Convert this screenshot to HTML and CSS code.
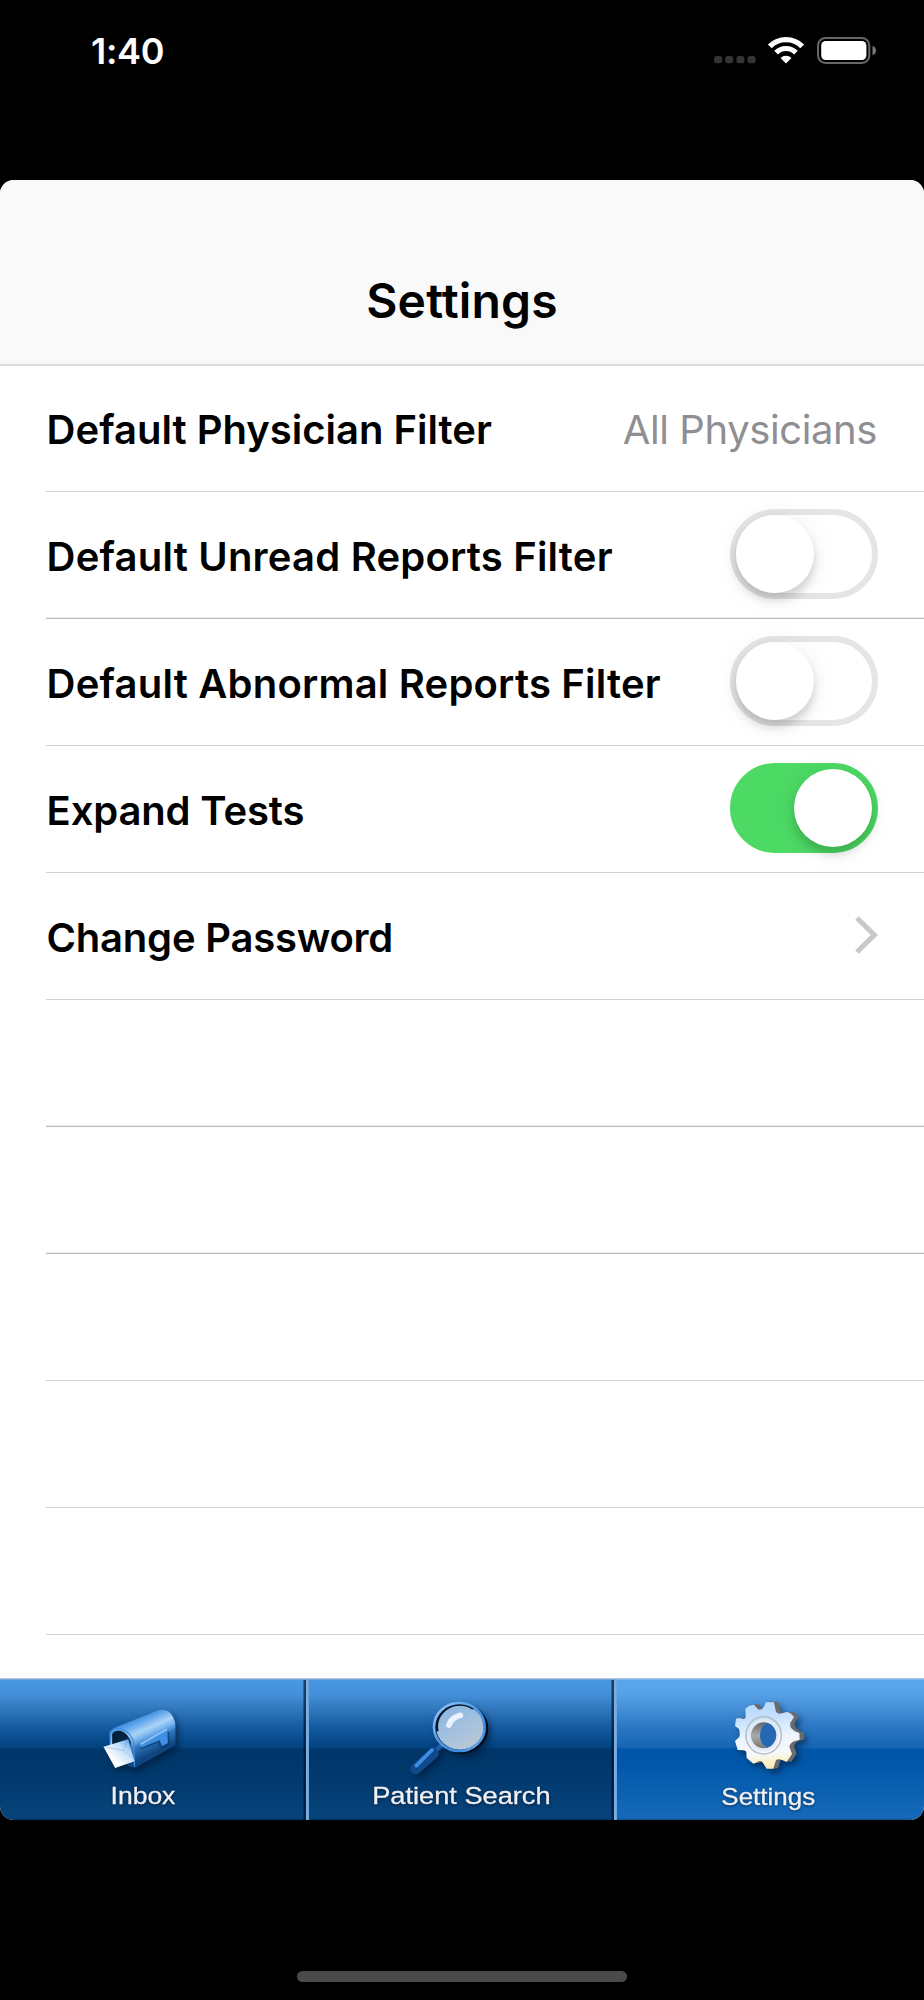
FILE: index.html
```html
<!DOCTYPE html>
<html lang="en">
<head>
<meta charset="utf-8">
<title>Settings</title>
<link rel="stylesheet" href="styles.css">
</head>
<body>
<div class="screen">
  <header class="status">
    <span class="time">1:40</span>
    <svg class="status-icons" width="164" height="30" viewBox="0 0 164 30">
      <g fill="#343434">
        <rect x="0" y="20" width="8" height="7.200" rx="2.500"/><rect x="11.200" y="20" width="8" height="7.200" rx="2.500"/>
        <rect x="22.400" y="20" width="8" height="7.200" rx="2.500"/><rect x="33.500" y="20" width="8" height="7.200" rx="2.500"/>
      </g>
      <g fill="none" stroke="#fff">
        <path d="M55.800 10.300A22.900 22.900 0 0 1 88.200 10.300" stroke-width="5.400"/>
        <path d="M62.100 16.600A14 14 0 0 1 81.900 16.600" stroke-width="5.200"/>
      </g>
      <path d="M72 27.500l-5.500-5.500a7.700 7.700 0 0 1 11 0z" fill="#fff"/>
      <rect x="104" y="2" width="51.300" height="25" rx="7.500" fill="none" stroke="#666" stroke-width="2"/>
      <rect x="107.200" y="4.900" width="45.200" height="19.200" rx="4.500" fill="#fff"/>
      <path d="M158.500 9.700q3.500 1.500 3.500 4.800t-3.500 4.800z" fill="#777"/>
    </svg>
  </header>

  <main class="card">
    <div class="navbar"><h1 class="title">Settings</h1></div>
    <ul class="list">
      <li class="row"><span class="label">Default Physician Filter</span><span class="value">All Physicians</span></li>
      <li class="row strong"><span class="label wide">Default Unread Reports Filter</span><span class="switch"><span class="knob"></span></span></li>
      <li class="row"><span class="label wide">Default Abnormal Reports Filter</span><span class="switch"><span class="knob"></span></span></li>
      <li class="row"><span class="label narrow">Expand Tests</span><span class="switch on"><span class="knob"></span></span></li>
      <li class="row"><span class="label narrower">Change Password</span>
        <svg class="chevron" width="23" height="38" viewBox="0 0 23 38"><path d="M2 2l17.300 17L2 36" fill="none" stroke="#c7c7cc" stroke-width="5.200"/></svg></li>
      <li class="row strong"></li>
      <li class="row strong"></li>
      <li class="row"></li>
      <li class="row"></li>
      <li class="row"></li>
    </ul>
    <nav class="tabs">
      <a class="tab tab-inbox">
        <svg class="icon" width="100" height="84" viewBox="0 0 100 84">
          <defs>
            <linearGradient id="roof" gradientUnits="userSpaceOnUse" x1="115" y1="55" x2="165" y2="165">
              <stop offset="0" stop-color="#3c8adb"/><stop offset=".15" stop-color="#5ba4ec"/><stop offset=".38" stop-color="#acd3f8"/>
              <stop offset=".54" stop-color="#72b0ec"/><stop offset=".7" stop-color="#2f76be"/><stop offset="1" stop-color="#0f4682"/>
            </linearGradient>
            <linearGradient id="hole" x1="0" y1="0" x2="1" y2="1">
              <stop offset="0" stop-color="#03182f"/><stop offset=".5" stop-color="#06284c"/><stop offset="1" stop-color="#3d8bdb"/>
            </linearGradient>
            <linearGradient id="letter" x1="0" y1="1" x2="1" y2="0">
              <stop offset=".3" stop-color="#fff"/><stop offset=".65" stop-color="#c3dff9"/><stop offset="1" stop-color="#4a94e4"/>
            </linearGradient>
          </defs>
          <g transform="translate(1.500 8) scale(.3333)">
            <path d="M47 98Q52 86 66 81L192 31Q222 24 236 52Q243 64 243 80V136L122 203L104 200L47 145Z" fill="url(#roof)"/>
            <path d="M47 145V98Q54 84 78 86Q106 94 117 124L120 200" fill="none" stroke="#3f90e2" stroke-width="4"/>
            <path d="M53 143V102Q60 90 80 93Q102 102 110 126V190Z" fill="url(#hole)"/>
            <path d="M27 140L101 118L120 184L62 204Z" fill="url(#letter)"/>
            <path d="M27 140L86 152L101 118M86 152L118 178" fill="none" stroke="#4c94df" stroke-opacity=".35" stroke-width="3"/>
            <path d="M137 146L196 124V137L206 142L222 132V95" fill="none" stroke="#06305f" stroke-opacity=".6" stroke-width="5"/>
            <path d="M137 133L217 87L220 129L203 138L195 119L139 143Z" fill="#3f90e2"/>
            <path d="M138 133L217 88" stroke="#8dc3f8" stroke-width="5"/>
          </g>
        </svg>
        <span class="tab-label">Inbox</span>
      </a>
      <a class="tab tab-search">
        <svg class="icon" width="100" height="84" viewBox="0 0 100 84">
          <defs>
            <linearGradient id="glass" x1="0" y1="0" x2=".6" y2="1">
              <stop offset="0" stop-color="#86b2de"/><stop offset=".6" stop-color="#a3c1df"/><stop offset="1" stop-color="#b9c6d5"/>
            </linearGradient>
            <linearGradient id="ring" x1="0" y1="0" x2="1" y2="1">
              <stop offset="0" stop-color="#9ccaf8"/><stop offset=".45" stop-color="#4f9ce9"/><stop offset=".75" stop-color="#3b8adf"/><stop offset="1" stop-color="#8ec0f2"/>
            </linearGradient>
          </defs>
          <g transform="translate(-112 -32) scale(.3333)">
            <path d="M404 274L432 249" stroke="#1c5fa8" stroke-width="14"/>
            <path d="M347 327L400 280" stroke="#11498a" stroke-width="33" stroke-linecap="round"/>
            <path d="M349 317L396 270" stroke="#3d8ee4" stroke-width="11" stroke-linecap="round"/>
            <ellipse cx="485" cy="206" rx="76" ry="71" fill="none" stroke="#020d1c" stroke-width="8"/>
            <ellipse cx="480" cy="202" rx="72" ry="67" fill="url(#glass)"/>
            <path d="M412 214A69 66 0 0 1 520 146" fill="none" stroke="#04142a" stroke-width="8"/>
            <ellipse cx="478" cy="201" rx="76" ry="72" fill="none" stroke="url(#ring)" stroke-width="8"/>
            <path d="M447 195Q453 174 481 166" fill="none" stroke="#e9f2fc" stroke-width="17" stroke-linecap="round"/>
          </g>
        </svg>
        <span class="tab-label">Patient Search</span>
      </a>
      <a class="tab tab-settings">
        <svg class="icon" width="100" height="84" viewBox="0 0 100 84">
          <defs>
            <linearGradient id="face" x1=".3" y1="0" x2=".4" y2="1">
              <stop offset="0" stop-color="#b3d8ff"/><stop offset=".25" stop-color="#c6e1fe"/><stop offset=".55" stop-color="#eef5fd"/>
              <stop offset=".78" stop-color="#f6f8fa"/><stop offset=".92" stop-color="#fbf0c8"/><stop offset="1" stop-color="#f8eab8"/>
            </linearGradient>
            <linearGradient id="bore" x1="0" y1="0" x2="0" y2="1">
              <stop offset="0" stop-color="#666"/><stop offset=".5" stop-color="#aaa"/><stop offset="1" stop-color="#777"/>
            </linearGradient>
            <path id="cog" d="M132 50L138 36L162 37L168 66Q175 73 186 70L200 66Q214 68 222 82L211 98Q209 108 214 115L224 124L238 129L239 149L222 154Q210 160 208 170L216 192L200 216L188 211Q176 205 168 210L160 236L140 236L127 216Q120 210 112 216L100 221L80 204L79 186Q76 180 68 181L53 180L45 153L58 141Q61 130 57 117L45 108L48 86L58 84L72 88Q79 84 77 74L76 56L88 47L102 44L114 58Q124 63 132 50Z"/>
          </defs>
          <g transform="translate(1 -2) scale(.3333)">
            <g fill="#6b6b6b"><use href="#cog" x="5" y="-1"/><use href="#cog" x="10" y="-1"/><use href="#cog" x="14" y="-1"/></g>
            <use href="#cog" fill="url(#face)"/>
            <ellipse cx="131" cy="136" rx="53" ry="56" fill="none" stroke="#b8c1ca" stroke-width="5"/>
            <ellipse cx="131" cy="136" rx="45" ry="48" fill="#e2ebf3"/>
            <ellipse cx="131" cy="136" rx="38" ry="39" fill="url(#bore)"/>
            <path d="M141 98A38 39 0 0 1 141 173Q120 162 120 136Q120 110 141 98Z" fill="#2268b2"/>
          </g>
        </svg>
        <span class="tab-label">Settings</span>
      </a>
    </nav>
  </main>
  <footer class="home"><span class="home-bar"></span></footer>
</div>
</body>
</html>
```
FILE: styles.css
```css
* {
  box-sizing: border-box;
}

body {
  margin: 0;
  background: #000;
  font-family: Inter, sans-serif;
}

.screen {
  display: flex;
  flex-direction: column;
  height: 2000px;
}

.status {
  height: 180px;
  display: flex;
  justify-content: space-between;
  align-items: flex-start;
  padding: 31px 46px 0 91px;
}

.time {
  color: #fff;
  font-size: 36px;
  font-weight: 600;
  line-height: 40px;
  letter-spacing: -0.3px;
}

.status-icons {
  margin-top: 5px;
}

.card {
  height: 1640px;
  background: #fff;
  border-radius: 14px;
  overflow: hidden;
  display: flex;
  flex-direction: column;
}

.navbar {
  height: 186px;
  flex: none;
  background: #f9f9f9;
  border-bottom: 2px solid #dcdcdd;
  display: flex;
  justify-content: center;
  padding-top: 91px;
}

.title {
  margin: 0;
  font-size: 48px;
  line-height: 60px;
  font-weight: 600;
  letter-spacing: 0.15px;
}

.list {
  list-style: none;
  margin: -1px 0 0;
  padding: 0 0 0 46px;
  flex: 1;
  overflow: hidden;
}

.row {
  height: 127px;
  border-bottom: 1px solid #d3d3d6;
  display: flex;
  align-items: center;
  justify-content: space-between;
  padding-right: 46px;
}

.row.strong {
  border-bottom-color: #bcbcc0;
  box-shadow: inset 0 -1px #ececed;
}

.label {
  font-size: 40px;
  font-weight: 600;
  padding: 2px 0 0 0.6px;
}

.label.wide {
  letter-spacing: 0.2px;
}

.label.narrow {
  letter-spacing: -0.15px;
}

.label.narrower {
  letter-spacing: -0.22px;
}

.value {
  font-size: 40px;
  color: #8e8e93;
  padding: 2px 1px 0 0;
  letter-spacing: -0.4px;
}

.switch {
  width: 148px;
  height: 90px;
  margin-bottom: 2px;
  border: 6px solid #e5e5e5;
  border-radius: 45px;
  display: flex;
}

.switch.on {
  background: #4cd964;
  border-color: #4cd964;
  justify-content: flex-end;
}

.knob {
  width: 78px;
  height: 78px;
  border-radius: 50%;
  background: #fff;
  box-shadow: 0 7px 10px rgba(0, 0, 0, 0.16), 0 3px 28px rgba(0, 0, 0, 0.07);
}

.chevron {
  margin-bottom: 2px;
}

.tabs {
  height: 142px;
  flex: none;
  display: grid;
  grid-template-columns: 309px 308px 307px;
}

.tab {
  display: flex;
  flex-direction: column;
  align-items: center;
  padding-top: 14px;
  color: #f0f0f4;
  font-family: "Liberation Sans", sans-serif;
  background:
    linear-gradient(90deg, rgba(0, 15, 40, 0.35) 1px, rgba(0, 15, 40, 0.65) 1px, rgba(0, 15, 40, 0.65) 3px, #7fb4e8 3px, #6ba3da 6px) right bottom / 6px 140px no-repeat,
    linear-gradient(#b9c4d0 0, #b9c4d0 1px, #6ea6de 1px, #6ea6de 2px, #4a97e1 2px, #4491db 16px, #3279bd 30px, #14599f 50px, #01427f 70px, #003669 71px, #003669 80px, #07437b 140px, #04305a 142px);
}

.tab-inbox {
  padding-right: 23px;
}

.tab-search {
  padding-right: 3px;
}

.tab-settings {
  padding-right: 4px;
  background: linear-gradient(#a8c1dc 0, #a8c1dc 1px, #7db7ef 1px, #7db7ef 2px, #5ba6eb 2px, #57a2e8 14px, #4590d8 30px, #2b76c3 50px, #1465b3 70px, #0057a9 71px, #0057a9 84px, #1669b9 140px, #0d4f90 142px);
}

.icon {
  overflow: visible;
  filter: drop-shadow(3px 4px 3px rgba(0, 15, 40, 0.5));
}

.tab-label {
  margin-top: 5px;
  font-size: 24.5px;
  line-height: 30px;
  white-space: nowrap;
  -webkit-text-stroke: 0.3px #f0f0f4;
  text-shadow: 0 1px 3px rgba(0, 0, 0, 0.6);
  transform: scaleX(1.08);
}

.tab-search .tab-label {
  transform: scaleX(1.11);
}

.tab-settings .tab-label {
  margin-top: 6px;
  transform: scaleX(1.06);
}

.home {
  flex: 1;
  display: flex;
  justify-content: center;
  align-items: flex-end;
  padding-bottom: 18px;
}

.home-bar {
  width: 330px;
  height: 11px;
  border-radius: 6px;
  background: #4a4a4a;
}
```
